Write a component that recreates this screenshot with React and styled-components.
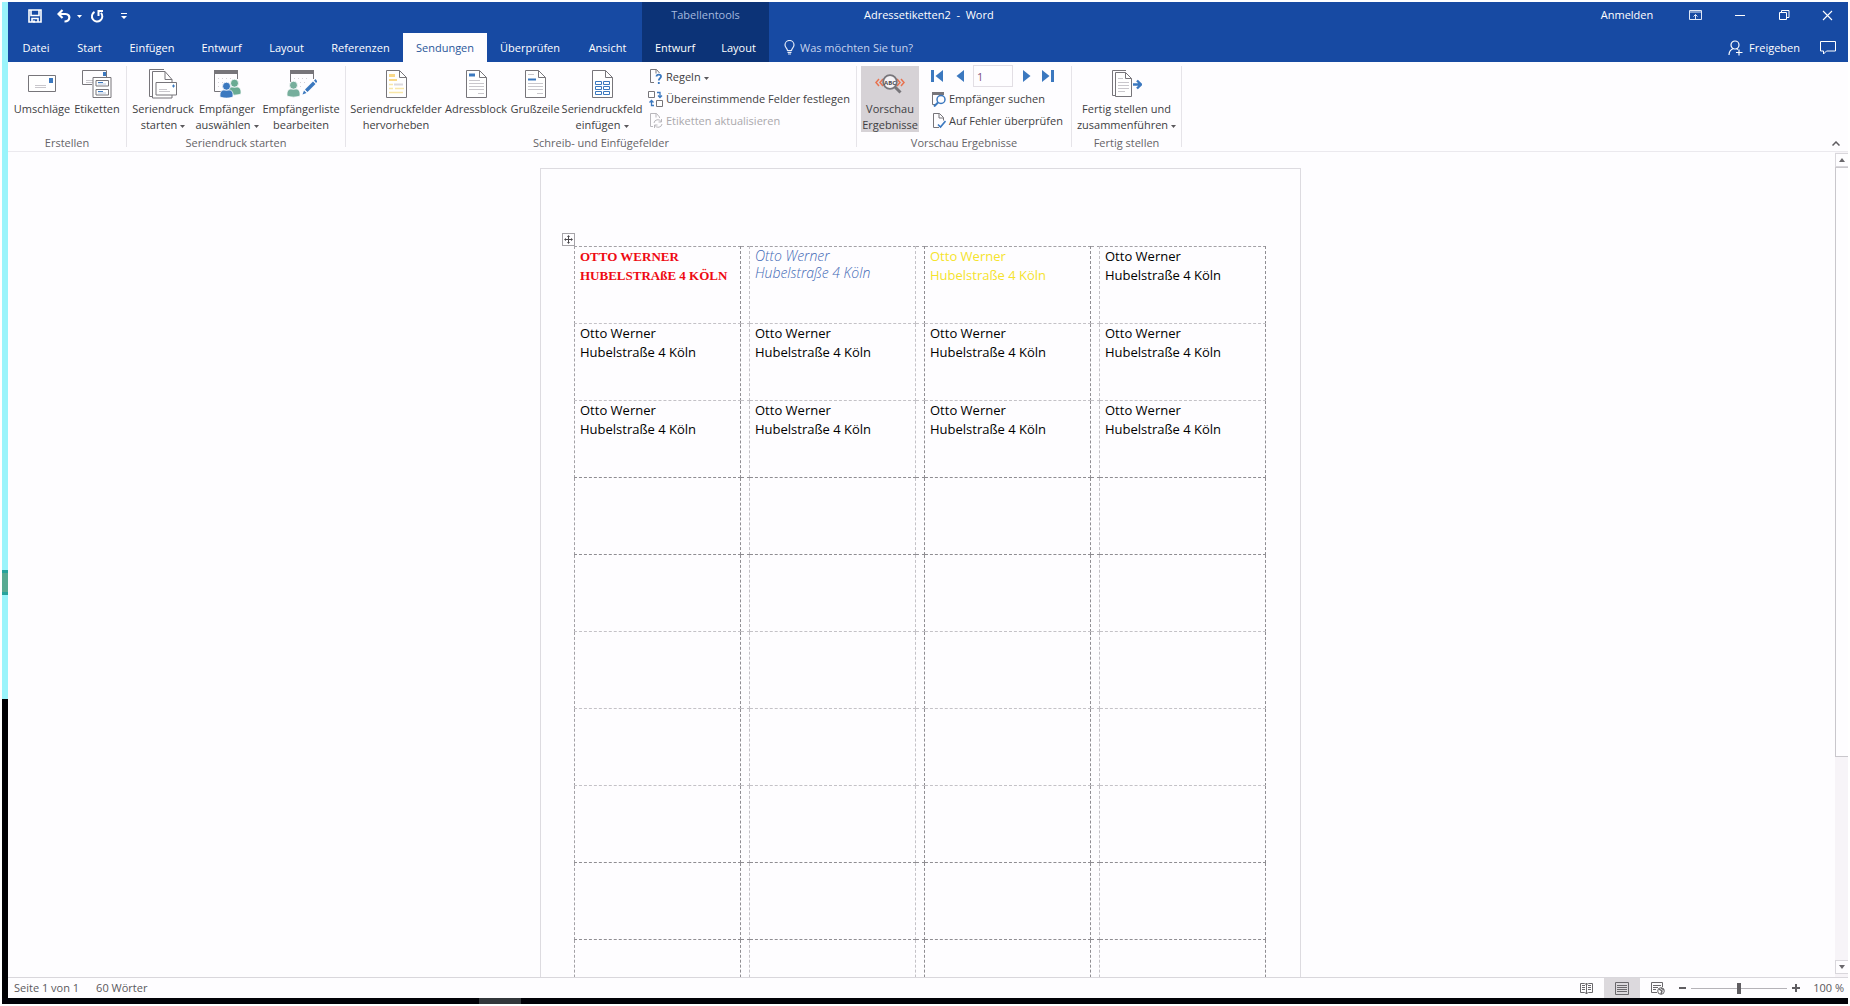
import React, { useState } from "react";
import styled, { createGlobalStyle, css } from "styled-components";

const GlobalStyle = createGlobalStyle`
  * {
    box-sizing: border-box;
  }
  body {
    margin: 0;
    background: #ffffff;
    color: #444444;
    font-family: "Open Sans", "Noto Sans", sans-serif;
    font-size: 11px;
    line-height: 16px;
  }
  button {
    border: 0;
    padding: 0;
    background: none;
    color: inherit;
    font: inherit;
  }
`;

// Desktop behind the window //

const Desktop = styled.div`
  display: grid;
  grid-template-columns: 6px minmax(0, 1fr);
  grid-template-rows: minmax(0, 1fr) 6px;
  height: 100vh;
  padding: 2px;
`;

const Wallpaper = styled.div`
  background: linear-gradient(
    #9af4fb 0 568px,
    #27a39c 568px 571px,
    #58aa92 571px 590px,
    #27a39c 590px 593px,
    #9af4fb 593px 697px,
    #000003 697px
  );
`;

const Taskbar = styled.div`
  grid-column: 1 / -1;
  display: flex;
  padding-left: 477px;
  background: #020208;
`;

const TaskbarItem = styled.span`
  width: 42px;
  background: #33373b;
`;

const Window = styled.div`
  display: flex;
  flex-direction: column;
  min-height: 0;
  background: #fefdff;
`;

// Title bar and tabs //

const TitleBar = styled.header`
  display: grid;
  grid-template-columns: 634px 127px minmax(0, 1fr) auto;
  height: 31px;
  background: #174aa3;
  color: #ffffff;
  line-height: 26px;
`;

const QuickAccess = styled.div`
  display: flex;
  height: 28px;
  padding-left: 13px;
`;

const QuickButton = styled.button`
  display: flex;
  justify-content: center;
  align-items: center;
  width: ${(props) => props.$width}px;
  height: 28px;
`;

const ContextLabel = styled.div`
  background: #0c3377;
  color: #a5b9df;
  text-align: center;
`;

const DocTitle = styled.div`
  padding-left: 95px;
  font-weight: 500;
  white-space: pre;
`;

const WindowButtons = styled.div`
  display: flex;
  height: 26px;
`;

const SignIn = styled.button`
  width: 66px;
  margin-right: 12px;
`;

const WindowButton = styled.button`
  display: flex;
  justify-content: center;
  align-items: center;
  width: ${(props) => props.$width || 44}px;
`;

const TabBar = styled.nav`
  display: flex;
  height: 29px;
  flex-shrink: 0;
  padding-left: 1px;
  background: #174aa3;
  color: #ffffff;
`;

const Tab = styled.button`
  width: ${(props) => props.$width}px;
  padding-top: 1px;
  white-space: nowrap;
  ${(props) =>
    props.$context &&
    css`
      background: #0c3377;
    `}
  ${(props) =>
    props.$active &&
    css`
      background: #fefdff;
      color: #2a579a;
    `}
`;

const TellMe = styled.label`
  display: flex;
  align-items: center;
  flex: 1;
  gap: 5px;
  padding-left: 15px;
`;

const TellMeInput = styled.input`
  width: 160px;
  border: 0;
  padding: 0;
  outline: 0;
  background: none;
  color: #ffffff;
  font: inherit;

  &::placeholder {
    color: #c6d3ec;
    opacity: 1;
  }
`;

const ShareButton = styled.button`
  display: flex;
  align-items: center;
  gap: 6px;
  padding-right: 20px;
`;

const CommentButton = styled.button`
  display: flex;
  align-items: center;
  padding-right: 12px;
`;

// Ribbon //

const Ribbon = styled.section`
  display: flex;
  height: 90px;
  flex-shrink: 0;
  padding-top: 4px;
  border-bottom: 1px solid #ebe9ee;
`;

const Group = styled.div`
  display: flex;
  flex-direction: column;
  width: ${(props) => props.$width}px;
  height: 81px;
  border-right: 1px solid #e6e4e9;
`;

const GroupBody = styled.div`
  display: flex;
  height: 69px;
  flex-shrink: 0;
  padding-left: 4px;
`;

const GroupName = styled.div`
  color: #666468;
  text-align: center;
  white-space: nowrap;
`;

const BigButton = styled.button`
  display: flex;
  flex-direction: column;
  align-items: center;
  width: ${(props) => props.$width}px;
  height: 66px;
  flex-shrink: 0;
  color: #403e42;
  white-space: nowrap;
  background: ${(props) => (props.$pressed ? "#d6d2d6" : "none")};
`;

const BigIcon = styled.span`
  display: flex;
  justify-content: center;
  align-items: center;
  height: 35px;
  flex-shrink: 0;
`;

const SmallColumn = styled.div`
  display: flex;
  flex-direction: column;
  padding-left: ${(props) => props.$indent}px;
`;

const SmallButton = styled.button`
  display: flex;
  align-items: center;
  gap: 3px;
  height: 22px;
  color: ${(props) => (props.disabled ? "#aaa8ac" : "#403e42")};
  white-space: nowrap;
`;

const RecordNav = styled.div`
  display: flex;
  align-items: center;
  height: 20px;
  margin-bottom: 2px;
`;

const NavButton = styled.button`
  display: flex;
  width: ${(props) => props.$width}px;
`;

const RecordInput = styled.input`
  width: 40px;
  height: 22px;
  margin-right: 10px;
  border: 1px solid #e2dee4;
  padding: 0 3px;
  background: #fefdff;
  color: #80507c;
  font: inherit;
`;

const Spacer = styled.div`
  flex: 1;
`;

const CollapseButton = styled.button`
  align-self: flex-end;
  width: 24px;
  height: 18px;
`;

// Document //

const Workspace = styled.main`
  display: flex;
  flex: 1;
  min-height: 0;
`;

const Canvas = styled.div`
  flex: 1;
  overflow: hidden;
  padding: 16px 2px 0 0;
`;

const Page = styled.article`
  position: relative;
  width: 761px;
  height: 1076px;
  margin: 0 auto;
  border: 1px solid #dddbe0;
  padding: 77px 0 0 33px;
`;

const MoveHandle = styled.button`
  position: absolute;
  top: 64px;
  left: 21px;
  display: flex;
  justify-content: center;
  align-items: center;
  width: 13px;
  height: 13px;
  border: 1px solid #a5a3a8;
  background: #fefdff;
`;

const LabelTable = styled.table`
  width: 692px;
  border-collapse: collapse;
  table-layout: fixed;
`;

const LabelRow = styled.tr`
  height: 77px;
`;

const edge = (strong) => (strong ? "#8f8d92" : "#c4c2c7");

const Cell = styled.td`
  border: 1px dashed #a3a1a6;
  border-right-color: ${(props) => edge(props.$strongRight)};
  border-bottom-color: ${(props) => edge(props.$strongBottom)};
  padding: 0;
`;

const Label = styled(Cell)`
  padding-left: 5px;
  color: ${(props) => props.$ink || "#000000"};
  font-size: 13px;
  line-height: 19px;
  vertical-align: top;
  white-space: pre;
  ${(props) =>
    props.$look === "slab" &&
    css`
      font-family: "Liberation Serif", serif;
      font-weight: 700;
    `}
  ${(props) =>
    props.$look === "script" &&
    css`
      font-size: 14px;
      font-style: italic;
      font-weight: 300;
      line-height: 17px;
    `}
`;

const Scrollbar = styled.div`
  display: flex;
  flex-direction: column;
  width: 13px;
  padding: 1px 0 3px;
  background: #f7f4f8;
`;

const ScrollArrow = styled.button`
  display: flex;
  justify-content: center;
  align-items: center;
  height: 14px;
  border: 1px solid #d9d7dc;
  border-right: 0;
  background: #fefdff;
`;

const ScrollThumb = styled.div`
  height: 590px;
  border: 1px solid #c9c7cc;
  border-right: 0;
  background: #fefdff;
`;

// Status bar //

const StatusBar = styled.footer`
  display: flex;
  align-items: center;
  height: 21px;
  flex-shrink: 0;
  border-top: 1px solid #d9d7dc;
  padding: 0 4px 0 6px;
  color: #5a585c;
`;

const StatusText = styled.span`
  margin-right: 17px;
`;

const ViewButton = styled.button`
  display: flex;
  justify-content: center;
  align-items: center;
  width: 36px;
  height: 20px;
  background: ${(props) => (props.$active ? "#dcd9dd" : "none")};
`;

const ZoomButton = styled.button`
  display: flex;
  justify-content: center;
  width: 12px;
`;

const ZoomSlider = styled.input`
  width: 96px;
  height: 12px;
  margin: 0 3px;
  appearance: none;
  background: linear-gradient(#b5b3b8, #b5b3b8) center / 100% 1px no-repeat;

  &::-webkit-slider-thumb {
    appearance: none;
    width: 4px;
    height: 11px;
    background: #5f5d61;
  }
`;

const ZoomValue = styled.span`
  width: 42px;
  text-align: right;
  white-space: nowrap;
`;

// Icons //

const gray = "#77757a";
const blue = "#3b78bf";
const green = "#69ab93";

const CaretSvg = styled.svg`
  margin-left: ${(props) => props.$gap}px;
  vertical-align: middle;
`;

const Caret = ({ color = "#5a585c", gap = 3 }) => (
  <CaretSvg $gap={gap} width="5" height="3" viewBox="0 0 5 3">
    <path d="M0 0h5L2.500 3z" fill={color} />
  </CaretSvg>
);

const SaveIcon = () => (
  <svg width="14" height="14" viewBox="0 0 14 14" fill="none" stroke="#fff" strokeWidth="1.600">
    <path d="M1 1h12v12H1zM3 1v5.500h8V1M4 13V9.500h6V13" />
    <path d="M5 11.500h2v2H5z" fill="#fff" stroke="none" />
  </svg>
);

const UndoIcon = () => (
  <svg width="14" height="14" viewBox="0 0 14 14" fill="none" stroke="#fff" strokeWidth="2.200">
    <path d="M5.500 1L1.500 5l4 4M2 5h6.500c5.500 0 5 7.500-1 7.500" />
  </svg>
);

const RedoIcon = () => (
  <svg width="14" height="14" viewBox="0 0 14 14" fill="none" stroke="#fff" strokeWidth="2">
    <path d="M4.500 2.800A5.200 5.200 0 1 0 11 3.800M8.500 7V2H13" />
  </svg>
);

const CustomizeIcon = () => (
  <svg width="6" height="7" viewBox="0 0 6 7">
    <path d="M0 0h6v1H0zM0 3h6L3 6z" fill="#fff" />
  </svg>
);

const RibbonModeIcon = () => (
  <svg width="13" height="11" viewBox="0 0 13 11" fill="none" stroke="#dfe7f6">
    <path d="M.5.500h12v9H.5zM.5 2h12M6.500 9V4.500M4.500 6.500l2-2 2 2" />
  </svg>
);

const RestoreIcon = () => (
  <svg width="11" height="10" viewBox="0 0 11 10" fill="none" stroke="#fff">
    <path d="M.5 2.500h7v7h-7zM2.500 2.500v-2h7.500v7H7.500" />
  </svg>
);

const CloseIcon = () => (
  <svg width="11" height="11" viewBox="0 0 11 11" stroke="#fff" strokeWidth="1.100">
    <path d="M1 1l9 9M10 1l-9 9" />
  </svg>
);

const BulbIcon = () => (
  <svg width="11" height="15" viewBox="0 0 11 15" fill="none" stroke="#e4ebf8" strokeWidth="1.200">
    <path d="M3.500 10.500c0-2-2.500-3-2.500-5.500a4.500 4.500 0 0 1 9 0c0 2.500-2.500 3.500-2.500 5.500zM3.500 12.300h4M4 14h3" />
  </svg>
);

const ShareIcon = () => (
  <svg width="15" height="16" viewBox="0 0 15 16" fill="none" stroke="#fff" strokeWidth="1.200">
    <circle cx="7" cy="5" r="4" />
    <path d="M1 15c0-3.500 1.800-5.500 4.300-6.500M8.500 8.500l1.500 1M11 9.500v6M8 12.500h6.500" />
  </svg>
);

const CommentIcon = () => (
  <svg width="16" height="14" viewBox="0 0 16 14" fill="none" stroke="#fff">
    <path d="M.5.500h15v9.500H6.500L3.500 13v-3h-3z" />
  </svg>
);

const EnvelopeIcon = () => (
  <svg width="28" height="18" viewBox="0 0 28 18">
    <path d="M.5.500h27v16H.5z" fill="#fff" stroke={gray} />
    <path d="M21 3h4v5h-4z" fill={blue} />
    <path d="M7 10.500h11M7 12.500h11" stroke="#c9c7cc" />
  </svg>
);

const LabelsIcon = () => (
  <svg width="30" height="28" viewBox="0 0 30 28" fill="none">
    <path d="M10 14.500H.5V.500h24V7" stroke={gray} />
    <path d="M21 2h3v4h-3z" fill={blue} />
    <path d="M4 10.500h7M4 12.500h7" stroke="#c9c7cc" />
    <path d="M11 7.500h18v20H11z" fill="#fff" stroke={gray} />
    <path d="M14 10.500h12.500v5.500H14zM14 19.500h12.500v5.500H14z" stroke={gray} />
    <path d="M16 12.500h5M16 21.500h5" stroke={blue} />
    <path d="M16 14h8M16 23h8" stroke="#b9c9e0" />
  </svg>
);

const StartMergeIcon = () => (
  <svg width="28" height="30" viewBox="0 0 28 30" fill="none" stroke={gray}>
    <path d="M4 27.500H.5V.500H15" />
    <path d="M3.500 29V2.500H16l7 8V29z" fill="#fff" />
    <path d="M16 2.500v8h7" />
    <path d="M7 13.500h20.500v12.500H7z" fill="#fff" />
    <path d="M24 16h1v2h-1z" fill={blue} stroke={blue} />
    <path d="M10 20.500h8M10 22.500h11" stroke="#c9c7cc" />
  </svg>
);

const Person = ({ x, y, color }) => (
  <g fill={color} stroke="#fefdff" strokeWidth=".8" transform={`translate(${x} ${y})`}>
    <path d="M0 15c-.5-6 2-7 4-7h5c2 0 4.500 1 4 7-3.500 1.500-9.500 1.500-13 0z" />
    <circle cx="6.500" cy="4.200" r="4" />
  </g>
);

const RecipientsIcon = () => (
  <svg width="29" height="29" viewBox="0 0 29 29">
    <path d="M1.500 4v18.500H8M24.500 4v6" stroke={gray} fill="none" />
    <path d="M1 1h24v4H1z" fill={gray} />
    <path d="M5 9.500h16M5 13.500h12M5 17.500h5" stroke="#d3d1d6" strokeDasharray="1 3" />
    <Person x={15} y={10} color={green} />
    <Person x={7} y={13} color={blue} />
  </svg>
);

const EditListIcon = () => (
  <svg width="31" height="29" viewBox="0 0 31 29">
    <path d="M4.500 4v9M27.500 4v6M20 21.500h2" stroke={gray} fill="none" />
    <path d="M4 1h24v4H4z" fill={gray} />
    <path d="M8 9.500h16M14 13.500h8M14 17.500h4" stroke="#d3d1d6" strokeDasharray="1 3" />
    <Person x={1} y={12} color="#76ae9c" />
    <path d="M16.500 25.500l1.500-4 2.500 2.500zM19 20.500l8-8 2.500 2.500-8 8zM28 11.500l1.500-1.500 2 2.500-1.500 1.500z" fill={blue} />
  </svg>
);

const Sheet = ({ children }) => (
  <svg width="21" height="28" viewBox="0 0 21 28" fill="none">
    <path d="M.5.500h13l7 7v20H.5z" fill="#fff" stroke={gray} />
    <path d="M13.500.500v7h7" stroke={gray} />
    {children}
  </svg>
);

const HighlightIcon = () => (
  <Sheet>
    <path d="M3 4h6v3H3zM3 9h8v2H3z" fill="#f9d98a" />
    <path d="M8 14.500h9" stroke="#dcd9dd" strokeWidth="2" />
    <path d="M3 14.500h4M3 18.500h4M9 18.500h9M3 22.500h14" stroke="#f9e7a8" strokeWidth="1.500" />
  </Sheet>
);

const AddressIcon = () => (
  <Sheet>
    <path d="M3 3.500h6v3H3z" fill={blue} />
    <path d="M3 10.500h11M3 13.500h15M3 16.500h15M3 19.500h15M12 23.500h6" stroke="#c9c7cc" />
  </Sheet>
);

const GreetingIcon = () => (
  <Sheet>
    <path d="M3 4.500h6M3 13.500h15M3 16.500h15M3 19.500h15M12 23.500h6" stroke="#c9c7cc" />
    <path d="M3 9.500h8" stroke={blue} strokeWidth="2" />
  </Sheet>
);

const FieldIcon = () => (
  <Sheet>
    <path
      d="M3.500 11.500h6v3h-6zM11.500 11.500h6v3h-6zM3.500 16.500h6v3h-6zM11.500 16.500h6v3h-6zM3.500 21.500h6v3h-6zM11.500 21.500h6v3h-6z"
      stroke={blue}
    />
  </Sheet>
);

const PreviewIcon = () => (
  <svg width="30" height="20" viewBox="0 0 30 20" fill="none">
    <path d="M4 5L1 8.500 4 12M8 5L5 8.500 8 12M22 5l3 3.500-3 3.500M26 5l3 3.500-3 3.500" stroke="#e8724f" strokeWidth="1.500" />
    <path d="M19.500 12.500l6 6" stroke={gray} strokeWidth="3" />
    <circle cx="15" cy="8" r="6.800" fill="#f5f3f6" stroke={gray} strokeWidth="1.800" />
    <text x="15" y="10.500" textAnchor="middle" fontSize="6" fontWeight="700" fill="#4a484c">
      ABC
    </text>
  </svg>
);

const FinishIcon = () => (
  <svg width="30" height="28" viewBox="0 0 30 28" fill="none" stroke={gray}>
    <path d="M3 25.500H.5V.500H14" />
    <path d="M3.500 2.500h10l6 6v18h-16z" fill="#fff" />
    <path d="M13.500 2.500v6h6" />
    <path d="M6 8.500h5M6 12.500h11M6 15.500h11M6 18.500h11M6 21.500h7" stroke="#c9c7cc" />
    <path d="M21 14.500h7M25 10.500l4 4-4 4" stroke={blue} strokeWidth="2.400" />
  </svg>
);

const RulesIcon = () => (
  <svg width="15" height="16" viewBox="0 0 15 16" fill="none" stroke={gray}>
    <path d="M6 13.500H2.500V.500h6l3 3.500M8 .500v4" />
    <path d="M8.500 7.500c.3-2.500 4.500-2.300 4.500 0 0 1.800-2.200 1.800-2.200 4M10.800 13v2" stroke={blue} strokeWidth="1.800" />
  </svg>
);

const MatchIcon = () => (
  <svg width="15" height="16" viewBox="0 0 15 16" fill="none" stroke={gray}>
    <path d="M.5.500h6v6h-6zM8.500 9.500h6v6h-6z" fill="#fff" />
    <path d="M9 1.500h3v5M10 4.500l2 2 2-2M6 14.500H3.500v-5M1.500 11.500l2-2 2 2" stroke={blue} strokeWidth="1.300" />
  </svg>
);

const UpdateIcon = () => (
  <svg width="15" height="16" viewBox="0 0 15 16" fill="none" stroke="#b9b7bc">
    <path d="M5 13.500H2.500V.500h6l3 3.500v1M8 .500v4" />
    <path d="M6 10a3.800 3.800 0 0 1 7-1.500M14 11a3.800 3.800 0 0 1-7 1.500M13.500 6v3h-3M6.500 15v-3h3" />
  </svg>
);

const FindIcon = () => (
  <svg width="15" height="15" viewBox="0 0 15 15" fill="none">
    <path d="M1.500 3v9.500H4" stroke={gray} />
    <path d="M1 0h12v3H1z" fill={gray} />
    <circle cx="10" cy="7.500" r="4" stroke={blue} strokeWidth="1.500" />
    <path d="M7 10.500l-4 4" stroke={blue} strokeWidth="2" />
  </svg>
);

const CheckIcon = () => (
  <svg width="15" height="16" viewBox="0 0 15 16" fill="none">
    <path d="M8 14.500H2.500V.500h6l4 4v3M8 .500v4.500h4.500" stroke={gray} />
    <path d="M7 11.500l2.500 2.500 5-6" stroke={blue} strokeWidth="1.600" />
  </svg>
);

const ArrowIcon = ({ flip, bar }) => (
  <svg width={bar ? 12 : 8} height="12" viewBox={bar ? "0 0 12 12" : "4 0 8 12"}>
    <g transform={flip ? (bar ? "rotate(180 6 6)" : "rotate(180 8 6)") : undefined} fill={blue}>
      {bar && <path d="M0 0h3v12H0z" />}
      <path d="M12 0v12L4.500 6z" />
    </g>
  </svg>
);

const MoveIcon = () => (
  <svg width="9" height="9" viewBox="0 0 9 9">
    <path d="M4.500 0L6 2H5v2h2V3l2 1.500L7 6V5H5v2h1L4.500 9 3 7h1V5H2v1L0 4.500 2 3v1h2V2H3z" fill="#4a484c" />
  </svg>
);

const ReadIcon = () => (
  <svg width="13" height="12" viewBox="0 0 13 12" fill="none" stroke="#6a686c">
    <path d="M.5 1.500h4l2 1 2-1h4v9h-4l-2 1-2-1h-4zM6.500 1v11M2 3.500h3M2 5.500h3M2 7.500h3M8 3.500h3M8 5.500h3M8 7.500h3" />
  </svg>
);

const PrintIcon = () => (
  <svg width="14" height="13" viewBox="0 0 14 13" fill="none" stroke="#6a686c">
    <path d="M.5.500h13v12H.5zM2 3.500h10M2 5.500h10M2 7.500h10M2 9.500h10" />
  </svg>
);

const WebIcon = () => (
  <svg width="14" height="13" viewBox="0 0 14 13" fill="none" stroke="#6a686c">
    <path d="M6 10.500H.5V.500h11V5M2 3.500h8M2 5.500h5M2 7.500h3" />
    <circle cx="10" cy="9" r="3.300" fill="#fff" />
    <path d="M8 7l3 2-1 3M10 6l3 2" strokeWidth="1.500" />
  </svg>
);

const tabs = [
  { name: "Datei", width: 54 },
  { name: "Start", width: 53 },
  { name: "Einfügen", width: 72 },
  { name: "Entwurf", width: 67 },
  { name: "Layout", width: 63 },
  { name: "Referenzen", width: 85 },
  { name: "Sendungen", width: 84 },
  { name: "Überprüfen", width: 86 },
  { name: "Ansicht", width: 69 },
  { name: "Entwurf", width: 66, context: true },
  { name: "Layout", width: 61, context: true },
];

const address = "Otto Werner\nHubelstraße 4 Köln";
const plain = { text: address };
const rows = [
  [
    { text: "OTTO WERNER\nHUBELSTRAßE 4 KÖLN", look: "slab", ink: "#ee0a12" },
    { text: address, look: "script", ink: "#3f69b5" },
    { text: address, ink: "#f5e32c" },
    plain,
  ],
  [plain, plain, plain, plain],
  [plain, plain, plain, plain],
  ...Array.from({ length: 7 }, () => [{}, {}, {}, {}]),
];
const strongRows = [2, 3, 7, 8];

const RibbonButton = ({ icon, lines, width, menu, pressed }) => (
  <BigButton $width={width} $pressed={pressed}>
    <BigIcon>{icon}</BigIcon>
    <span>{lines[0]}</span>
    {lines[1] && (
      <span>
        {lines[1]}
        {menu && <Caret />}
      </span>
    )}
  </BigButton>
);

const App = () => {
  const [activeTab, setActiveTab] = useState(6);
  const [record, setRecord] = useState("1");
  const [zoom, setZoom] = useState(100);

  return (
    <>
      <GlobalStyle />
      <Desktop>
        <Wallpaper />
        <Window>
          <TitleBar>
            <QuickAccess>
              <QuickButton $width={28} aria-label="Speichern"><SaveIcon /></QuickButton>
              <QuickButton $width={40} aria-label="Rückgängig"><UndoIcon /><Caret color="#fff" gap={6} /></QuickButton>
              <QuickButton $width={16} aria-label="Wiederholen"><RedoIcon /></QuickButton>
              <QuickButton $width={38} aria-label="Anpassen"><CustomizeIcon /></QuickButton>
            </QuickAccess>
            <ContextLabel>Tabellentools</ContextLabel>
            <DocTitle>Adressetiketten2  -  Word</DocTitle>
            <WindowButtons>
              <SignIn>Anmelden</SignIn>
              <WindowButton $width={46} aria-label="Menüband-Anzeige"><RibbonModeIcon /></WindowButton>
              <WindowButton aria-label="Minimieren">
                <svg width="10" height="1"><path d="M0 0h10v1H0z" fill="#fff" /></svg>
              </WindowButton>
              <WindowButton aria-label="Verkleinern"><RestoreIcon /></WindowButton>
              <WindowButton $width={42} aria-label="Schließen"><CloseIcon /></WindowButton>
            </WindowButtons>
          </TitleBar>

          <TabBar>
            {tabs.map((tab, i) => (
              <Tab
                key={i}
                $width={tab.width}
                $context={tab.context}
                $active={i === activeTab}
                onClick={() => setActiveTab(i)}
              >
                {tab.name}
              </Tab>
            ))}
            <TellMe>
              <BulbIcon />
              <TellMeInput placeholder="Was möchten Sie tun?" aria-label="Was möchten Sie tun?" />
            </TellMe>
            <ShareButton><ShareIcon /> Freigeben</ShareButton>
            <CommentButton aria-label="Kommentare"><CommentIcon /></CommentButton>
          </TabBar>

          <Ribbon>
            <Group $width={119}>
              <GroupBody>
                <RibbonButton width={60} icon={<EnvelopeIcon />} lines={["Umschläge"]} />
                <RibbonButton width={50} icon={<LabelsIcon />} lines={["Etiketten"]} />
              </GroupBody>
              <GroupName>Erstellen</GroupName>
            </Group>
            <Group $width={219}>
              <GroupBody>
                <RibbonButton width={64} icon={<StartMergeIcon />} lines={["Seriendruck", "starten"]} menu />
                <RibbonButton width={64} icon={<RecipientsIcon />} lines={["Empfänger", "auswählen"]} menu />
                <RibbonButton width={84} icon={<EditListIcon />} lines={["Empfängerliste", "bearbeiten"]} />
              </GroupBody>
              <GroupName>Seriendruck starten</GroupName>
            </Group>
            <Group $width={511}>
              <GroupBody>
                <RibbonButton width={92} icon={<HighlightIcon />} lines={["Seriendruckfelder", "hervorheben"]} />
                <RibbonButton width={68} icon={<AddressIcon />} lines={["Adressblock"]} />
                <RibbonButton width={50} icon={<GreetingIcon />} lines={["Grußzeile"]} />
                <RibbonButton width={84} icon={<FieldIcon />} lines={["Seriendruckfeld", "einfügen"]} menu />
                <SmallColumn $indent={4}>
                  <SmallButton><RulesIcon /><span>Regeln<Caret /></span></SmallButton>
                  <SmallButton><MatchIcon />Übereinstimmende Felder festlegen</SmallButton>
                  <SmallButton disabled><UpdateIcon />Etiketten aktualisieren</SmallButton>
                </SmallColumn>
              </GroupBody>
              <GroupName>Schreib- und Einfügefelder</GroupName>
            </Group>
            <Group $width={215}>
              <GroupBody>
                <RibbonButton width={58} icon={<PreviewIcon />} lines={["Vorschau", "Ergebnisse"]} pressed />
                <SmallColumn $indent={12}>
                  <RecordNav>
                    <NavButton $width={25} aria-label="Erster Datensatz"><ArrowIcon bar /></NavButton>
                    <NavButton $width={17} aria-label="Vorheriger Datensatz"><ArrowIcon /></NavButton>
                    <RecordInput
                      aria-label="Datensatz"
                      value={record}
                      onChange={(e) => setRecord(e.target.value)}
                    />
                    <NavButton $width={19} aria-label="Nächster Datensatz"><ArrowIcon flip /></NavButton>
                    <NavButton $width={12} aria-label="Letzter Datensatz"><ArrowIcon flip bar /></NavButton>
                  </RecordNav>
                  <SmallButton><FindIcon />Empfänger suchen</SmallButton>
                  <SmallButton><CheckIcon />Auf Fehler überprüfen</SmallButton>
                </SmallColumn>
              </GroupBody>
              <GroupName>Vorschau Ergebnisse</GroupName>
            </Group>
            <Group $width={110}>
              <GroupBody>
                <RibbonButton width={101} icon={<FinishIcon />} lines={["Fertig stellen und", "zusammenführen"]} menu />
              </GroupBody>
              <GroupName>Fertig stellen</GroupName>
            </Group>
            <Spacer />
            <CollapseButton aria-label="Menüband reduzieren">
              <svg width="8" height="5" viewBox="0 0 8 5" fill="none" stroke="#5f5d61" strokeWidth="1.500">
                <path d="M.5 4.500L4 1l3.500 3.500" />
              </svg>
            </CollapseButton>
          </Ribbon>

          <Workspace>
            <Canvas>
              <Page>
                <MoveHandle aria-label="Tabelle verschieben"><MoveIcon /></MoveHandle>
                <LabelTable>
                  <colgroup>
                    <col />
                    <col width="9" />
                    <col />
                    <col width="9" />
                    <col />
                    <col width="9" />
                    <col />
                  </colgroup>
                  <tbody>
                    {rows.map((row, r) => (
                      <LabelRow key={r}>
                        {row.map((cell, c) => (
                          <React.Fragment key={c}>
                            {c > 0 && (
                              <Cell $strongRight={c === 2} $strongBottom={strongRows.includes(r)} />
                            )}
                            <Label
                              $look={cell.look}
                              $ink={cell.ink}
                              $strongRight={c !== 1}
                              $strongBottom={strongRows.includes(r)}
                            >
                              {cell.text}
                            </Label>
                          </React.Fragment>
                        ))}
                      </LabelRow>
                    ))}
                  </tbody>
                </LabelTable>
              </Page>
            </Canvas>
            <Scrollbar>
              <ScrollArrow aria-label="Nach oben">
                <svg width="6" height="4"><path d="M3 0l3 4H0z" fill="#6a686c" /></svg>
              </ScrollArrow>
              <ScrollThumb />
              <Spacer />
              <ScrollArrow aria-label="Nach unten">
                <svg width="6" height="4"><path d="M0 0h6L3 4z" fill="#6a686c" /></svg>
              </ScrollArrow>
            </Scrollbar>
          </Workspace>

          <StatusBar>
            <StatusText>Seite 1 von 1</StatusText>
            <StatusText>60 Wörter</StatusText>
            <Spacer />
            <ViewButton aria-label="Lesemodus"><ReadIcon /></ViewButton>
            <ViewButton $active aria-label="Seitenlayout"><PrintIcon /></ViewButton>
            <ViewButton aria-label="Weblayout"><WebIcon /></ViewButton>
            <ZoomButton aria-label="Verkleinern">
              <svg width="7" height="2"><path d="M0 0h7v2H0z" fill="#5f5d61" /></svg>
            </ZoomButton>
            <ZoomSlider
              type="range"
              min="10"
              max="190"
              aria-label="Zoom"
              value={zoom}
              onChange={(e) => setZoom(Number(e.target.value))}
            />
            <ZoomButton aria-label="Vergrößern">
              <svg width="8" height="8"><path d="M3 0h2v3h3v2H5v3H3V5H0V3h3z" fill="#5f5d61" /></svg>
            </ZoomButton>
            <ZoomValue>{zoom} %</ZoomValue>
          </StatusBar>
        </Window>
        <Taskbar><TaskbarItem /></Taskbar>
      </Desktop>
    </>
  );
};

export default App;
